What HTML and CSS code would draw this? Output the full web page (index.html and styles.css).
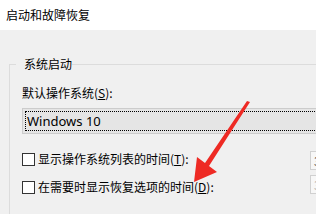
FILE: index.html
```html
<!DOCTYPE html>
<html>
<head>
<meta charset="utf-8">
<link rel="stylesheet" href="styles.css">
</head>
<body>
<div class="titlebar">启动和故障恢复</div>
<div class="content">
  <fieldset class="group">
    <legend>系统启动</legend>
    <div class="label">默认操作系统(<u>S</u>):</div>
    <div class="combo"><div class="focus">Windows 10</div></div>
    <div class="row row1"><span class="cb"></span><span class="text">显示操作系统列表的时间(<u>T</u>):</span><span class="spin">30</span></div>
    <div class="row row2"><span class="cb"></span><span class="text">在需要时显示恢复选项的时间(<u>D</u>):</span><span class="spin dim">30</span></div>
  </fieldset>
</div>
<svg class="arrow" width="316" height="214" viewBox="0 0 316 214">
  <polygon points="247,101 250,102 209,166 217,172 194,182 197,157 205,163" fill="#ee2a24"/>
</svg>
</body>
</html>
```

FILE: styles.css
```css
html, body {
  margin: 0;
  padding: 0;
  width: 316px;
  height: 214px;
  overflow: hidden;
  background: #f0f0f0;
  font-family: "Noto Sans CJK SC", "Noto Sans", sans-serif;
  font-size: 12px;
  color: #000;
  position: relative;
}
.titlebar {
  height: 30px;
  background: #fff;
  line-height: 30px;
  padding-left: 6px;
  box-sizing: border-box;
}
.content {
  padding: 26px 0 0 9px;
}
.group {
  margin: 0;
  border: 1px solid #dcdcdc;
  padding: 13px 0 20px 12px;
  width: 360px;
  box-sizing: border-box;
}
.group legend {
  padding: 0 0 0 8px;
  line-height: 16px;
  margin-left: -6px;
}
.label {
  line-height: 16px;
}
u { text-decoration: underline; text-underline-offset: 1px; }
.combo {
  margin-top: 7px;
  height: 26px;
  box-sizing: border-box;
  border: 1px solid #cccccc;
  background: #e5e5e5;
  padding: 2px;
}
.focus {
  height: 100%;
  box-sizing: border-box;
  border: 1px dotted #000;
  font-family: "Noto Sans", sans-serif;
  font-size: 13px;
  line-height: 18px;
  padding-left: 1px;
}
.row {
  display: grid;
  grid-template-columns: 13px 1fr 40px;
  column-gap: 3px;
  width: 328px;
  height: 20px;
  align-items: center;
}
.row1 { margin-top: 14px; }
.row2 { margin-top: 9px; }
.cb {
  width: 13px;
  height: 13px;
  box-sizing: border-box;
  border: 1px solid #333;
  background: #fff;
}
.text { line-height: 20px; }
.spin {
  align-self: start;
  margin-top: 3px;
  height: 19px;
  box-sizing: border-box;
  border: 1px solid #d0d0d0;
  background: #f7f7f7;
  line-height: 17px;
  padding-left: 3px;
  color: #444;
}
.row2 .spin { margin-top: -2px; }
.spin.dim { color: #aaa; }
.arrow {
  position: absolute;
  left: 0;
  top: 0;
}
```
